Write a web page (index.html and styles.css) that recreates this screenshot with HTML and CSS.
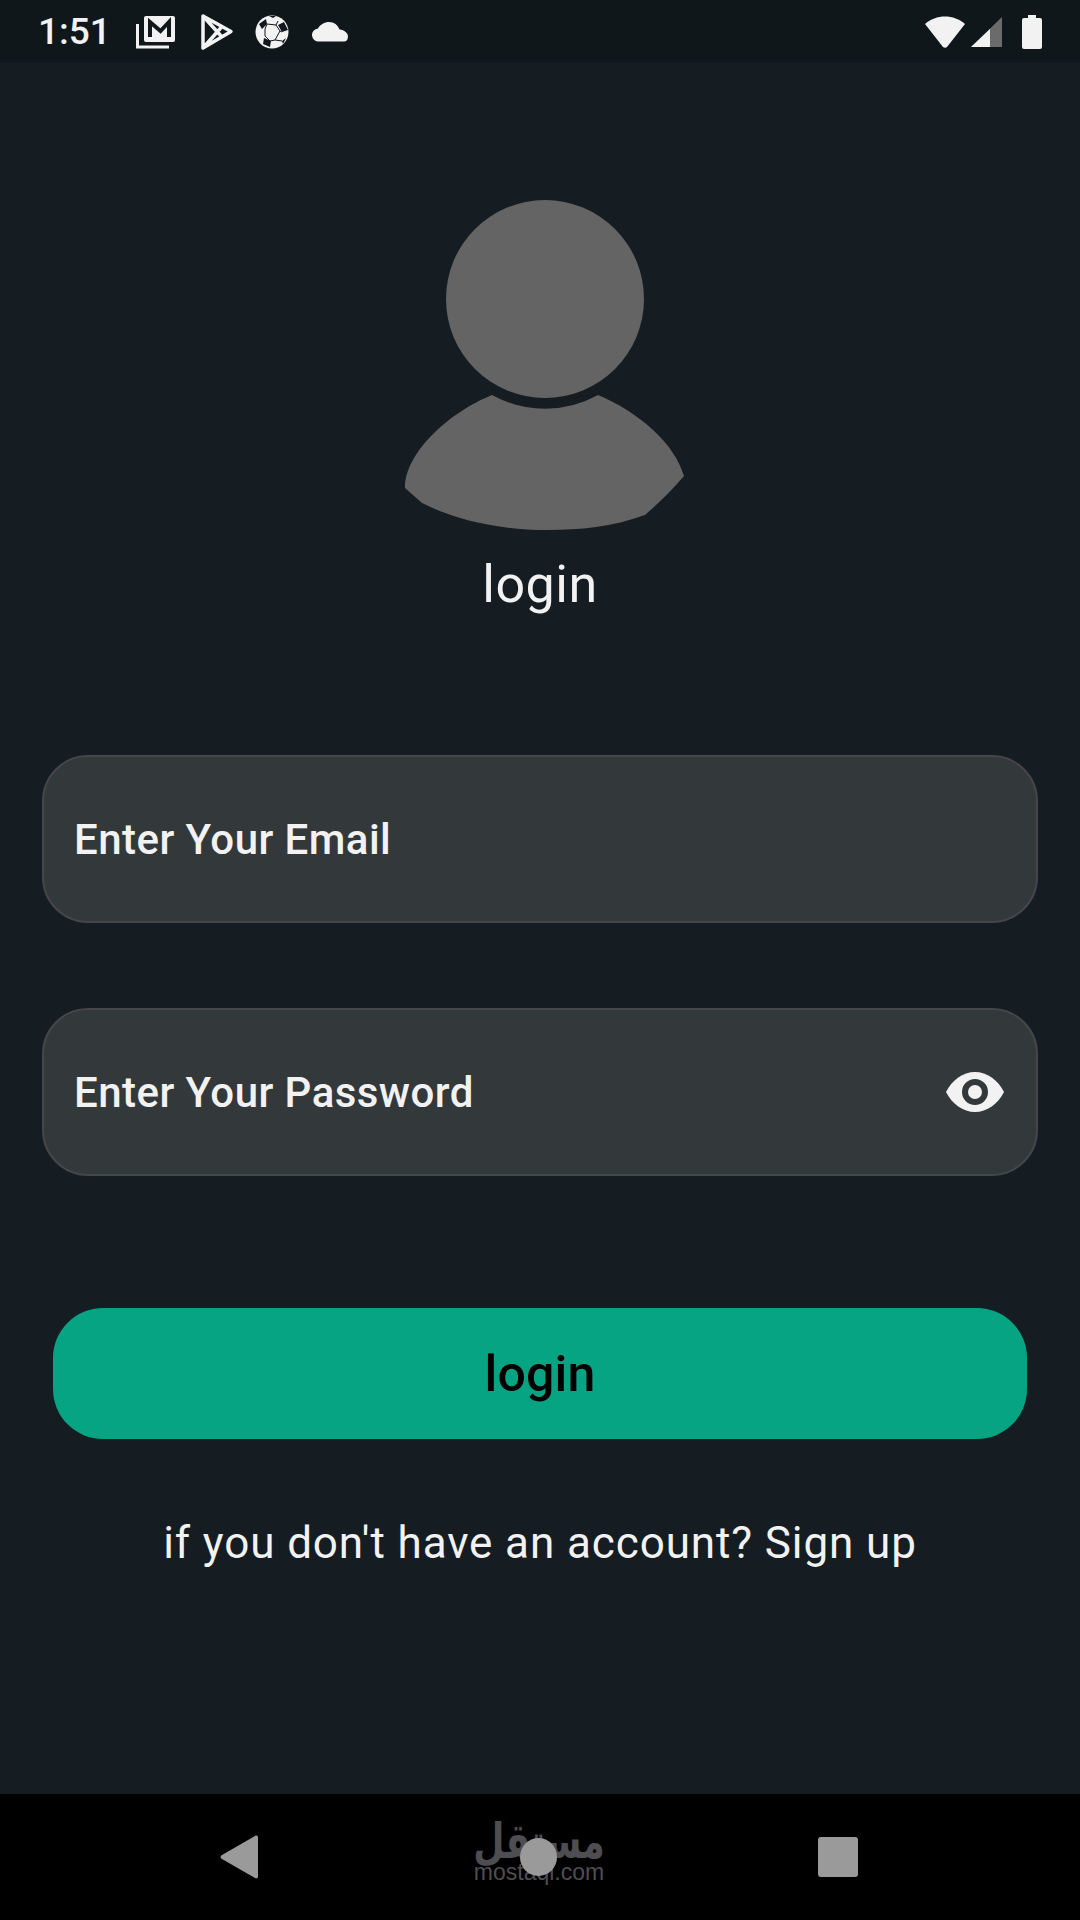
FILE: index.html
```html
<html>
<head>
  <meta charset="UTF-8">
  <title>Login</title>
  <link rel="stylesheet" href="styles.css">
</head>
<body>

<header class="status">
  <span class="time">1:51</span>
  <svg class="ic-gmail" width="40" height="34" viewBox="0 0 40 34">
    <path d="M1.500 9v23H33" fill="none" stroke="#f2f2f2" stroke-width="3"/>
    <rect x="8" y="1" width="31" height="26" rx="2" fill="#f2f2f2"/>
    <path d="M14 22V7l10.500 9L33 7v15" fill="none" stroke="#10181c" stroke-width="4"/>
  </svg>
  <svg class="ic-play" width="34" height="38" viewBox="0 0 34 38">
    <path d="M3 3L31 18.500 3 35z M3 3L22 24 M3 35L22 13.500" fill="none" stroke="#f2f2f2" stroke-width="3.500" stroke-linejoin="round"/>
  </svg>
  <svg class="ic-ball" width="34" height="34" viewBox="0 0 34 34">
    <circle cx="17" cy="17" r="16.500" fill="#f2f2f2"/>
    <path d="M4 9l7-5 1 5-5 5z M23 10l6-3 4 8-6 2z M9 23l7 3-1 6-7-3z M27 26l4-3-3 6z M14 1h7l-3 2z" fill="#10181c"/>
    <path d="M12 9l9 1 4 6-5 9-5 1-5-5 0-7z M21 10l2-4 M25 16l2 1 M20 25l7 1" fill="none" stroke="#10181c" stroke-width="1"/>
  </svg>
  <svg class="ic-cloud" width="36" height="22" viewBox="0 0 36 22">
    <path d="M7 20.500a6.500 6.500 0 0 1-1-13C8 3.500 13 1 17 1c5 0 9 3 10.500 7.500 5 .5 8.500 3.500 8.500 7 0 3-1.500 5-4 5z" fill="#f2f2f2"/>
  </svg>
  <span class="status-right">
    <svg class="ic-wifi" width="42" height="34" viewBox="0 0 42 34">
      <path d="M1 9C12-1 30-1 41 9L23 32c-1 1-3 1-4 0z" fill="#f2f2f2"/>
    </svg>
    <svg class="ic-signal" width="32" height="32" viewBox="0 0 32 32">
      <path d="M31 1v30H0z" fill="#6b6b6b"/>
      <path d="M19 13v18H0z" fill="#f2f2f2"/>
    </svg>
    <svg class="ic-battery" width="20" height="34" viewBox="0 0 20 34">
      <path d="M6 0h8v3h4a2 2 0 0 1 2 2v27a2 2 0 0 1-2 2H2a2 2 0 0 1-2-2V5a2 2 0 0 1 2-2h4z" fill="#f2f2f2"/>
    </svg>
  </span>
</header>

<main class="screen">
  <svg class="avatar" width="300" height="345" viewBox="0 0 300 345">
    <circle cx="155" cy="109" r="99" fill="#646464"/>
    <path d="M102 205A109 109 0 0 0 208 205C248 222 284 252 294 286C282 300 268 314 255 325C222 337 190 340 157 340 110 340 65 330 32 313L15 298C15 262 60 222 102 205z" fill="#646464"/>
  </svg>
  <h1 class="title">login</h1>

  <div class="field email">Enter Your Email</div>
  <div class="field password">
    <span>Enter Your Password</span>
    <svg width="58" height="40" viewBox="0 0 58 40">
      <path d="M0 20C6 8 17 0 29 0s23 8 29 20C52 32 41 40 29 40S6 32 0 20z" fill="#f2f2f2"/>
      <circle cx="29" cy="20" r="10" fill="#f2f2f2" stroke="#33383b" stroke-width="6"/>
    </svg>
  </div>

  <button class="btn">login</button>
  <p class="signup">if you don't have an account? Sign up</p>
</main>

<footer class="nav">
  <svg width="40" height="44" viewBox="0 0 40 44">
    <path d="M35 1c1-1 3 0 3 1v40c0 1-2 2-3 1L2 24c-2-1-2-3 0-4z" fill="#9a9a9a"/>
  </svg>
  <div class="mark">
    <span class="mark-ar">مستقل</span>
    <span class="mark-en">mostaql.com</span>
    <span class="home"></span>
  </div>
  <span class="recent"></span>
</footer>

</body>
</html>
```
FILE: styles.css
```css
body { margin: 0; padding: 0; width: 1080px; height: 1920px; background: #151d22; font-family: Roboto, sans-serif; color: #f2f2f2; display: flex; flex-direction: column; overflow: hidden; }

.status { height: 63px; background: #0f171a; display: flex; align-items: center; padding: 0 38px; }
.time { font-size: 37px; font-weight: 500; width: 98px; white-space: nowrap; }
.ic-gmail { margin-right: 24px; }
.ic-play { margin-right: 21px; }
.ic-ball { margin-right: 23px; }
.status-right { margin-left: auto; display: flex; align-items: center; }
.ic-wifi { margin-right: 5px; }
.ic-signal { margin-right: 19px; }

.screen { flex: 1; display: flex; flex-direction: column; align-items: center; }
.avatar { margin-top: 127px; }
.title { margin: 20px 0 0; font-size: 52px; line-height: 60px; font-weight: 400; letter-spacing: .5px; }

.field { box-sizing: border-box; width: 996px; height: 168px; background: #33383b; border: 2px solid #45454a; border-radius: 46px; padding: 0 32px 0 30px; display: flex; align-items: center; justify-content: space-between; font-size: 42px; font-weight: 500; letter-spacing: .45px; }
.email { margin-top: 140px; }
.password { margin-top: 85px; }

.btn { display: block; width: 974px; height: 131px; margin-top: 132px; background: #07a484; border: 0; border-radius: 50px; font-family: Roboto, sans-serif; font-size: 50px; font-weight: 500; letter-spacing: .2px; color: #000; }
.signup { margin: 79px 0 0; font-size: 44px; line-height: 50px; letter-spacing: .9px; }

.nav { height: 126px; background: #000; display: flex; align-items: center; justify-content: space-between; box-sizing: border-box; padding: 0 222px 0 220px; }
.mark { position: relative; width: 140px; height: 70px; display: flex; flex-direction: column; align-items: center; color: #4e4e52; }
.mark-ar { margin-top: 9px; font-family: "DejaVu Sans", sans-serif; font-size: 36px; font-weight: 700; line-height: 34px; transform: scaleY(1.35); transform-origin: bottom; }
.mark-en { font-family: "Liberation Sans", sans-serif; font-size: 23px; line-height: 14px; }
.home { position: absolute; left: 51px; top: 16px; width: 37px; height: 38px; border-radius: 50%; background: #9a9a9a; }
.recent { width: 40px; height: 40px; border-radius: 3px; background: #9a9a9a; }
```
